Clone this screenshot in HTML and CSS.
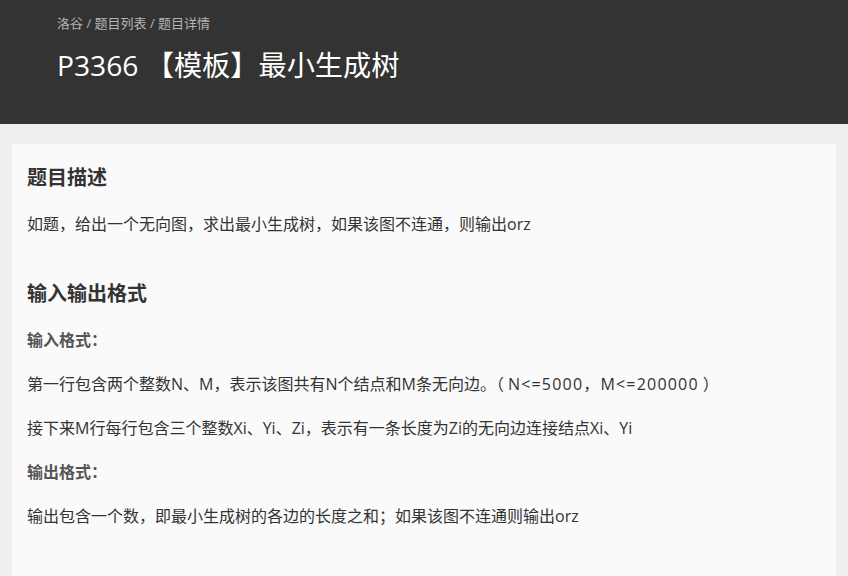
FILE: index.html
```html
<!DOCTYPE html>
<html lang="zh-CN">
<head>
<meta charset="utf-8">
<title>P3366 【模板】最小生成树</title>
<link rel="stylesheet" href="styles.css">
</head>
<body>
<header class="banner">
  <nav class="crumbs">洛谷 / 题目列表 / 题目详情</nav>
  <h1 class="title">P3366 【模板】最小生成树</h1>
</header>
<main class="wrap">
  <article class="card">
    <h2 class="sec">题目描述</h2>
    <p class="txt">如题，给出一个无向图，求出最小生成树，如果该图不连通，则输出orz</p>
    <h2 class="sec sec-gap">输入输出格式</h2>
    <h3 class="sub">输入格式：</h3>
    <p class="txt">第一行包含两个整数N、M，表示该图共有N个结点和M条无向边。（<span class="num">N&lt;=5000，M&lt;=200000</span>）</p>
    <p class="txt">接下来M行每行包含三个整数Xi、Yi、Zi，表示有一条长度为Zi的无向边连接结点Xi、Yi</p>
    <h3 class="sub">输出格式：</h3>
    <p class="txt">输出包含一个数，即最小生成树的各边的长度之和；如果该图不连通则输出orz</p>
  </article>
</main>
</body>
</html>
```
FILE: styles.css
```css
* { box-sizing: border-box; }
html, body { margin: 0; padding: 0; }
body {
  background: #efefef;
  font-family: "Open Sans", "Noto Sans CJK SC", sans-serif;
  color: #333;
}
.banner {
  background: #333333;
  height: 124px;
  padding: 13px 57px 0;
}
.crumbs {
  font-size: 13px;
  line-height: 20px;
  color: #b4b4b4;
}
.title {
  margin: 12px 0 0;
  font-size: 28.2px;
  line-height: 40px;
  font-weight: normal;
  color: #fff;
}
.wrap {
  padding: 20px 12px 0;
}
.card {
  background: #fafafa;
  padding: 10px 15px 30px;
  min-height: 440px;
}
.sec {
  margin: 10px 0 0;
  font-size: 20px;
  line-height: 28px;
  font-weight: bold;
  color: #333;
}
.sec-gap { margin-top: 44px; }
.sub {
  margin: 20px 0 0;
  font-size: 16px;
  line-height: 24px;
  font-weight: bold;
  color: #555;
}
.txt {
  margin: 20px 0 0;
  font-size: 16px;
  line-height: 24px;
  color: #333;
}
.num {
  letter-spacing: 1.2px;
  padding: 0 4px;
}
```
